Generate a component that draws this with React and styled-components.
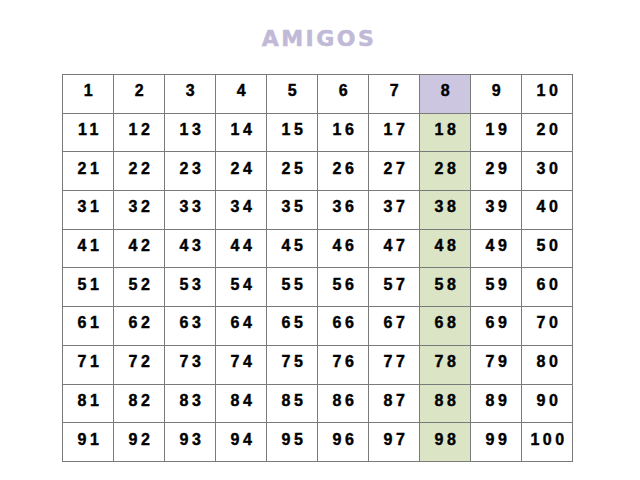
import React from "react";
import styled, { createGlobalStyle } from "styled-components";

const Global = createGlobalStyle`
  html, body { margin: 0; padding: 0; background: #ffffff; }
  body { font-family: "Liberation Sans", Arial, sans-serif; }
`;

const Page = styled.div`
  width: 640px;
  height: 480px;
  display: flex;
  flex-direction: column;
  align-items: flex-start;
  padding: 25px 0 0 62px;
  box-sizing: border-box;
`;

const Title = styled.h1`
  margin: 0;
  width: 511px;
  text-align: center;
  font-family: "DejaVu Sans", sans-serif;
  font-weight: 700;
  font-size: 22px;
  line-height: 28px;
  letter-spacing: 2.5px;
  color: #c0b9d8;
  padding-left: 3px;
  box-sizing: border-box;
  -webkit-text-stroke: 0.5px #c0b9d8;
`;

const Grid = styled.div`
  margin-top: 21px;
  display: grid;
  grid-template-columns: repeat(10, 50px);
  grid-template-rows: repeat(10, 37.7px);
  gap: 1px;
  padding: 1px;
  background: #7a7a7a;
  width: max-content;
`;

const Cell = styled.div`
  display: flex;
  align-items: center;
  justify-content: center;
  padding: 0 0 5px 4px;
  box-sizing: border-box;
  background: ${(p) => (p.$tone === "purple" ? "#cdc6e1" : p.$tone === "green" ? "#dbe5c6" : "#ffffff")};
  font-family: "Liberation Sans", Arial, sans-serif;
  font-weight: 700;
  font-size: 16px;
  letter-spacing: 3.5px;
  color: #000000;
  -webkit-text-stroke: 0.4px #000;
`;

export default function App() {
  const nums = Array.from({ length: 100 }, (_, i) => i + 1);
  return (
    <>
      <Global />
      <Page>
        <Title>AMIGOS</Title>
        <Grid>
          {nums.map((n) => (
            <Cell key={n} $tone={n === 8 ? "purple" : n % 10 === 8 ? "green" : undefined}>
              {n}
            </Cell>
          ))}
        </Grid>
      </Page>
    </>
  );
}
